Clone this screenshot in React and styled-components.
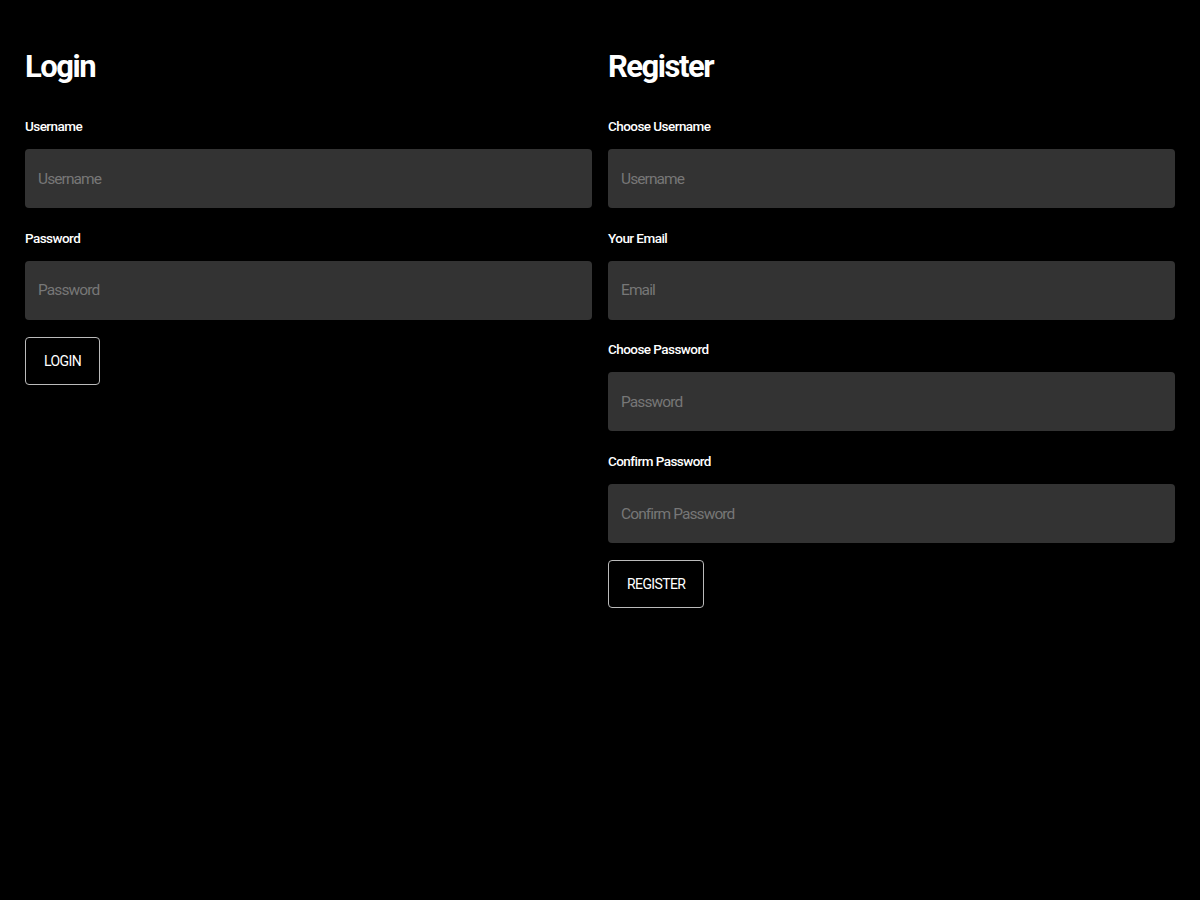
import React from 'react';
import styled, { createGlobalStyle } from 'styled-components';

const GlobalStyle = createGlobalStyle`
  body {
    margin: 0;
    background: #000000;
    font-family: 'Roboto', 'Liberation Sans', sans-serif;
  }
`;

const App = () => {
  return (
    <>
      <GlobalStyle />
      <Page>
        <Column>
          <Title>Login</Title>
          <Field>
            <Label>Username</Label>
            <Input type="text" placeholder="Username" />
          </Field>
          <Field>
            <Label>Password</Label>
            <Input type="password" placeholder="Password" />
          </Field>
          <Button>LOGIN</Button>
        </Column>
        <Column>
          <Title>Register</Title>
          <Field>
            <Label>Choose Username</Label>
            <Input type="text" placeholder="Username" />
          </Field>
          <Field>
            <Label>Your Email</Label>
            <Input type="email" placeholder="Email" />
          </Field>
          <Field>
            <Label>Choose Password</Label>
            <Input type="password" placeholder="Password" />
          </Field>
          <Field>
            <Label>Confirm Password</Label>
            <Input type="password" placeholder="Confirm Password" />
          </Field>
          <Button>REGISTER</Button>
        </Column>
      </Page>
    </>
  );
};

const Page = styled.div`
  display: grid;
  grid-template-columns: 1fr 1fr;
  gap: 16px;
  padding: 49px 25px 0;
  min-height: 900px;
  box-sizing: border-box;
  background: #000000;
`;

const Column = styled.div`
  display: flex;
  flex-direction: column;
  align-items: flex-start;
`;

const Title = styled.h1`
  margin: 0 0 31px;
  font-size: 31px;
  line-height: 36px;
  font-weight: 700;
  letter-spacing: -1.5px;
  color: #ffffff;
`;

const Field = styled.div`
  display: flex;
  flex-direction: column;
  width: 100%;
  margin-bottom: 19.7px;

  &:last-of-type {
    margin-bottom: 17px;
  }
`;

const Label = styled.label`
  font-size: 13.5px;
  line-height: 20px;
  font-weight: 500;
  letter-spacing: -0.55px;
  color: #ffffff;
  margin-bottom: 13px;
`;

const Input = styled.input`
  box-sizing: border-box;
  width: 100%;
  height: 59px;
  padding: 0 13px;
  border: none;
  border-radius: 4px;
  background-color: #333333;
  color: #ffffff;
  font-family: 'Roboto', sans-serif;
  font-size: 15.5px;
  letter-spacing: -0.9px;
  outline: none;

  &::placeholder {
    color: #777777;
  }
`;

const Button = styled.button`
  height: 48px;
  padding: 0 18px;
  background: transparent;
  border: 1px solid #bbbbbb;
  border-radius: 4px;
  color: #ffffff;
  font-family: 'Roboto', sans-serif;
  font-size: 14px;
  letter-spacing: -0.6px;
  cursor: pointer;
`;

export default App;
